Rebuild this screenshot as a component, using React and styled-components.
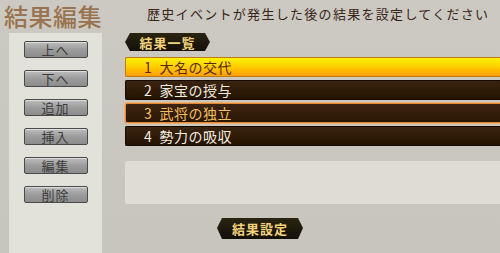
import React from 'react';
import styled, { createGlobalStyle } from 'styled-components';

const GlobalStyle = createGlobalStyle`
  body {
    margin: 0;
    background: #c9c7bf;
    font-family: "Noto Sans CJK JP", "Noto Sans", sans-serif;
  }
`;

const Page = styled.div`
  width: 500px;
  height: 253px;
  overflow: hidden;
  background: linear-gradient(180deg, #cbc9c1 0%, #c7c5bc 100%);
  display: flex;
  flex-direction: column;
`;

const Header = styled.div`
  height: 33px;
  display: flex;
  align-items: flex-start;
`;

const Title = styled.h1`
  margin: -2px 0 0 4px;
  font-size: 24px;
  line-height: 35px;
  font-weight: 500;
  letter-spacing: 0.5px;
  color: #9a7450;
`;

const Subtitle = styled.p`
  margin: 4px 0 0 45px;
  font-size: 13px;
  line-height: 20px;
  letter-spacing: 1.3px;
  color: #3a2418;
  white-space: nowrap;
`;

const Body = styled.div`
  flex: 1;
  display: flex;
  gap: 23px;
`;

const Side = styled.div`
  margin-left: 9px;
  width: 93px;
  padding-top: 8px;
  background: #e3e2da;
  display: flex;
  flex-direction: column;
  align-items: center;
  gap: 12px;
`;

const SideButton = styled.button`
  width: 64px;
  height: 17px;
  padding: 0;
  border: 1px solid #4a4a4a;
  border-radius: 2px;
  background: linear-gradient(180deg, #bdbdbd 0%, #9c9c9c 50%, #8c8c8c 100%);
  box-shadow: inset 0 1px 0 #dcdcdc;
  font-family: inherit;
  font-size: 13px;
  line-height: 15px;
  letter-spacing: 1px;
  color: #3c3c3c;
`;

const Main = styled.div`
  flex: 1;
  display: flex;
  flex-direction: column;
`;

const Badge = styled.div`
  align-self: flex-start;
  width: 85px;
  height: 18px;
  display: flex;
  align-items: center;
  justify-content: center;
  background: linear-gradient(180deg, #2a2410 0%, #14100a 100%);
  clip-path: polygon(5px 0, 80px 0, 85px 9px, 80px 18px, 5px 18px, 0 9px);
  font-size: 13px;
  font-weight: 700;
  letter-spacing: 1px;
  color: #f2d27a;
  ${p => p.$center && `align-self: auto; margin: 0 0 0 92px; height: 21px; width: 86px;
    clip-path: polygon(5px 0, 81px 0, 86px 10px, 81px 21px, 5px 21px, 0 10px);`}
`;

const List = styled.div`
  margin-top: 6px;
  display: flex;
  flex-direction: column;
  gap: 3px;
`;

const rowStyles = {
  active: `
    background: linear-gradient(180deg, #fff200 0%, #ffd200 45%, #ff9c00 100%);
    border-color: #c07a10;
    color: #5a2a00;
  `,
  hover: `
    background: linear-gradient(180deg, #3c2410 0%, #2a1604 100%);
    border-color: #e08a38;
    box-shadow: 0 0 0 1px #f0b070;
    color: #f2bf62;
  `,
  normal: `
    background: linear-gradient(180deg, #3a2410 0%, #241300 100%);
    border-color: #160a00;
    color: #f2ece0;
  `,
};

const Row = styled.div`
  height: 20px;
  box-sizing: border-box;
  border: 1px solid;
  border-right: none;
  border-radius: 2px 0 0 2px;
  display: flex;
  align-items: center;
  padding-left: 18px;
  font-size: 14px;
  letter-spacing: 0.5px;
  white-space: pre;
  ${p => rowStyles[p.$state]}
`;

const Note = styled.div`
  margin-top: 15px;
  height: 43px;
  background: #dedcd3;
  border-radius: 2px 0 0 2px;
`;

const Footer = styled.div`
  margin-top: 14px;
  display: flex;
`;

const moves = ['上へ', '下へ', '追加', '挿入', '編集', '削除'];

const results = [
  { n: 1, label: '大名の交代', state: 'active' },
  { n: 2, label: '家宝の授与', state: 'normal' },
  { n: 3, label: '武将の独立', state: 'hover' },
  { n: 4, label: '勢力の吸収', state: 'normal' },
];

export default function App() {
  return (
    <Page>
      <GlobalStyle />
      <Header>
        <Title>結果編集</Title>
        <Subtitle>歴史イベントが発生した後の結果を設定してください</Subtitle>
      </Header>
      <Body>
        <Side>
          {moves.map(m => (
            <SideButton key={m}>{m}</SideButton>
          ))}
        </Side>
        <Main>
          <Badge>結果一覧</Badge>
          <List>
            {results.map(r => (
              <Row key={r.n} $state={r.state}>{`${r.n}  ${r.label}`}</Row>
            ))}
          </List>
          <Note />
          <Footer>
            <Badge $center>結果設定</Badge>
          </Footer>
        </Main>
      </Body>
    </Page>
  );
}
